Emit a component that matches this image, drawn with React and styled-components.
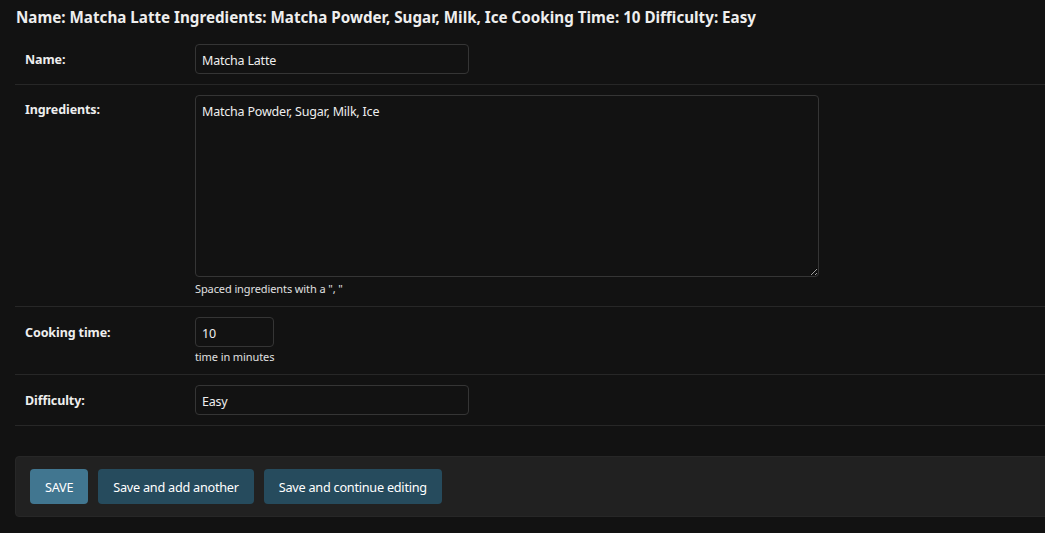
import React from 'react'
import styled, { createGlobalStyle } from 'styled-components'

const GlobalStyle = createGlobalStyle`
  html, body {
    margin: 0;
    padding: 0;
    background: #121212;
    color: #eeeeee;
    font-family: "Noto Sans", "Open Sans", sans-serif;
    overflow: hidden;
  }
`

const Page = styled.div`
  padding: 0 0 0 15px;
  width: calc(100% + 10px);
  box-sizing: border-box;
`

const Title = styled.h1`
  margin: 0;
  padding: 7px 0 0 1px;
  height: 27px;
  font-size: 15.2px;
  font-weight: 700;
  color: #eeeeee;
`

const Fieldset = styled.fieldset`
  margin: 0 0 30px;
  padding: 0;
  border: none;
`

const Row = styled.div`
  display: flex;
  padding: 10px;
  border-bottom: 1px solid #272727;
`

const Label = styled.label`
  width: 160px;
  padding: ${p => (p.$top ? '6px' : '7px')} 10px 0 0;
  font-size: 12.5px;
  letter-spacing: -0.1px;
  font-weight: 700;
  color: #eeeeee;
  flex-shrink: 0;
`

const Field = styled.div`
  display: flex;
  flex-direction: column;
`

const TextInput = styled.input`
  box-sizing: border-box;
  width: ${p => p.$width || 274}px;
  height: 30px;
  padding: 6px 6px 4px;
  background: #121212;
  color: #eeeeee;
  border: 1px solid #353535;
  border-radius: 4px;
  font-family: inherit;
  font-size: 12.5px;
  letter-spacing: -0.2px;
  outline: none;
`

const TextArea = styled.textarea`
  box-sizing: border-box;
  display: block;
  width: 624px;
  height: 182px;
  padding: 6px 6px 5px;
  background: #121212;
  color: #eeeeee;
  border: 1px solid #353535;
  border-radius: 4px;
  font-family: inherit;
  font-size: 12.5px;
  letter-spacing: -0.2px;
  line-height: 20px;
  outline: none;
  resize: both;
`

const Help = styled.div`
  margin-top: ${p => p.$gap || 3}px;
  font-size: 11px;
  line-height: 14px;
  letter-spacing: -0.1px;
  color: #e0e0e0;
`

const SubmitRow = styled.div`
  display: flex;
  gap: 10px;
  padding: 12px 14px;
  background: #212121;
  border: 1px solid #272727;
  border-radius: 4px;
`

const Button = styled.button`
  height: 35px;
  padding: 0 15px;
  border: none;
  border-radius: 4px;
  background: ${p => (p.$primary ? '#417690' : '#264b5d')};
  color: #ffffff;
  font-family: inherit;
  font-size: 12.7px;
  letter-spacing: -0.25px;
  text-transform: ${p => (p.$primary ? 'uppercase' : 'none')};
  cursor: pointer;
`

export default function App() {
  return (
    <>
      <GlobalStyle />
      <Page>
        <Title>
          Name: Matcha Latte Ingredients: Matcha Powder, Sugar, Milk, Ice Cooking Time: 10 Difficulty: Easy
        </Title>
        <Fieldset>
          <Row>
            <Label>Name:</Label>
            <TextInput defaultValue="Matcha Latte" />
          </Row>
          <Row>
            <Label $top>Ingredients:</Label>
            <Field>
              <TextArea defaultValue="Matcha Powder, Sugar, Milk, Ice" />
              <Help $gap={5}>Spaced ingredients with a ", "</Help>
            </Field>
          </Row>
          <Row>
            <Label>Cooking time:</Label>
            <Field>
              <TextInput $width={79} defaultValue="10" />
              <Help>time in minutes</Help>
            </Field>
          </Row>
          <Row>
            <Label>Difficulty:</Label>
            <TextInput defaultValue="Easy" />
          </Row>
        </Fieldset>
        <SubmitRow>
          <Button $primary>Save</Button>
          <Button>Save and add another</Button>
          <Button>Save and continue editing</Button>
        </SubmitRow>
      </Page>
    </>
  )
}
